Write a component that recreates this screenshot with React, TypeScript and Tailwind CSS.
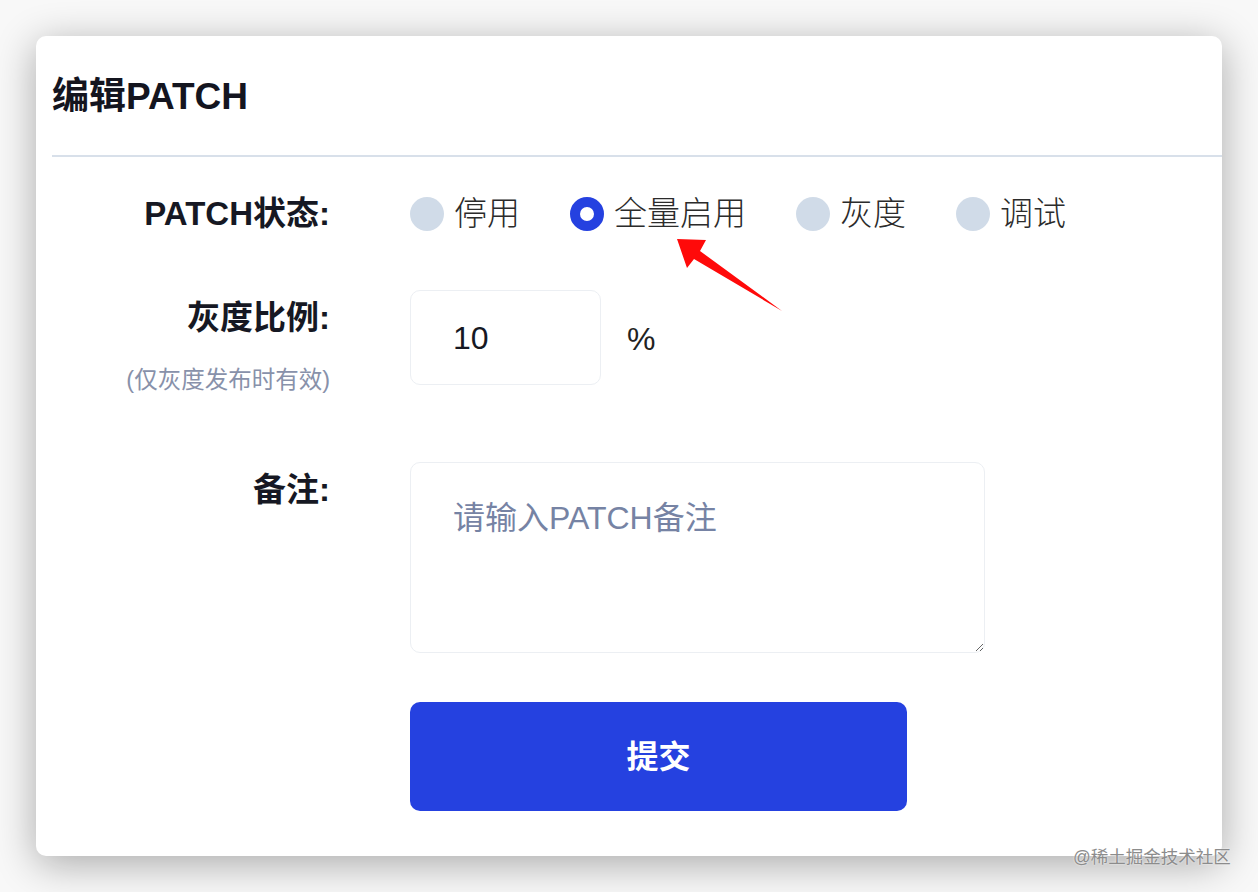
import { useState } from 'react';

const statusOptions = ['停用', '全量启用', '灰度', '调试'];

export default function App() {
  const [status, setStatus] = useState('全量启用');

  return (
    <div className="relative w-[1258px] h-[892px] overflow-hidden bg-[#f8f8f8] pt-[36px] pl-[36px] font-['Liberation_Sans','Noto_Sans_CJK_SC',sans-serif]">
      <div className="w-[1186px] h-[820px] bg-white rounded-[10px] shadow-[0_8px_40px_rgba(0,0,0,0.32)]">
        {/* Header */}
        <div className="ml-4 h-[121px] flex items-center pt-[2px] border-b-2 border-[#d8e0ea] text-[37px] font-bold text-[#14151f]">
          编辑PATCH
        </div>

        {/* PATCH status */}
        <div className="mt-[40px] flex items-center h-[34px]">
          <div className="w-[294px] text-right text-[33px] leading-[40px] font-bold text-[#161823]">PATCH状态:</div>
          <div className="ml-[80px] flex items-center gap-[50px]">
            {statusOptions.map((opt) => (
              <button key={opt} onClick={() => setStatus(opt)} className="flex items-center gap-[10px]">
                {status === opt ? (
                  <span className="w-[34px] h-[34px] rounded-full border-[10px] border-[#2541e0] bg-white" />
                ) : (
                  <span className="w-[34px] h-[34px] rounded-full bg-[#d0dbe8]" />
                )}
                <span className="text-[33px] leading-[40px] font-light text-[#2b2b2b]">{opt}</span>
              </button>
            ))}
          </div>
        </div>

        {/* Gray ratio */}
        <div className="mt-[59px] flex items-start">
          <div className="w-[294px] flex flex-col items-end pt-[8px]">
            <div className="text-[33px] leading-[40px] font-bold text-[#161823]">灰度比例:</div>
            <div className="mt-[26px] text-[23.5px] leading-[32px] text-[#8891aa]">(仅灰度发布时有效)</div>
          </div>
          <div className="ml-[80px] flex items-center">
            <input
              readOnly
              defaultValue="10"
              className="w-[191px] h-[95px] border border-[#eceff3] rounded-[10px] px-[42px] pt-[2px] text-[32px] text-[#161823] outline-none"
            />
            <span className="ml-[26px] pt-[2px] text-[32px] text-[#222]">%</span>
          </div>
        </div>

        {/* Remark */}
        <div className="mt-[66px] flex items-start">
          <div className="w-[294px] pt-[8px] text-right text-[33px] leading-[40px] font-bold text-[#161823]">备注:</div>
          <textarea
            placeholder="请输入PATCH备注"
            className="ml-[80px] w-[575px] h-[191px] border border-[#eceff3] rounded-[10px] px-[42px] pt-[35px] text-[32px] leading-[40px] text-[#161823] placeholder:text-[#7683a4] outline-none"
          />
        </div>

        {/* Submit */}
        <div className="mt-[49px] pl-[374px]">
          <button className="w-[497px] h-[109px] rounded-[10px] bg-[#2541e0] text-white text-[32px] font-bold">
            提交
          </button>
        </div>
      </div>

      {/* annotation arrow */}
      <svg className="absolute left-0 top-0 pointer-events-none" width="1258" height="892">
        <polygon points="677,239 706,240 700,251 782,311 694,259 687,268" fill="#ff0a0a" />
      </svg>

      {/* watermark */}
      <div className="absolute left-[1073px] top-[845px] text-[17.5px] leading-[24px] text-[#8c8c8c] [text-shadow:0_0_2px_#fff]">
        @稀土掘金技术社区
      </div>
    </div>
  );
}
